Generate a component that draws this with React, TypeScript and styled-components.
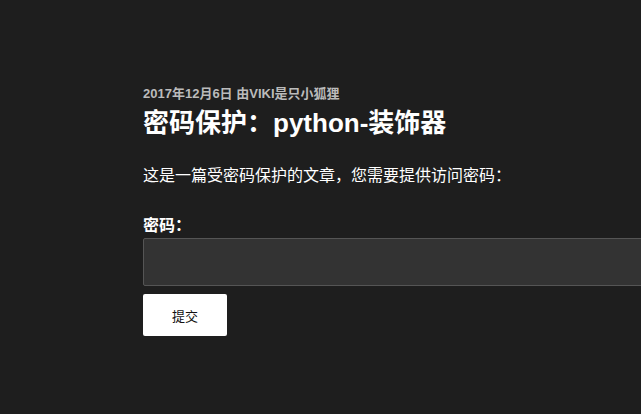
import React from "react";
import styled, { createGlobalStyle } from "styled-components";

const Global = createGlobalStyle`
  html, body { margin: 0; padding: 0; background: #1e1e1e; }
  body { font-family: "Liberation Sans", Arial, "Noto Sans CJK SC", sans-serif; color: #ffffff; }
`;

const Page = styled.main`
  padding: 86px 0 0 143px;
  overflow: hidden;
  height: 414px;
  box-sizing: border-box;
`;

const Meta = styled.div`
  font-size: 13px;
  font-weight: 700;
  color: #bbbbbb;
  line-height: 16px;
`;

const Title = styled.h1`
  font-size: 26px;
  font-weight: 700;
  color: #ffffff;
  margin: 5px 0 0;
  line-height: 32px;
`;

const Text = styled.p`
  font-size: 16px;
  margin: 26px 0 0;
  line-height: 22px;
`;

const Form = styled.form`
  margin-top: 27px;
  display: flex;
  flex-direction: column;
  align-items: flex-start;
`;

const Label = styled.label`
  font-size: 16px;
  font-weight: 700;
  line-height: 24px;
`;

const Input = styled.input`
  width: 520px;
  height: 48px;
  box-sizing: border-box;
  background: #333333;
  border: 1px solid #555555;
  border-radius: 2px;
`;

const Button = styled.button`
  margin-top: 8px;
  width: 84px;
  height: 42px;
  background: #ffffff;
  color: #111111;
  border: none;
  border-radius: 2px;
  font-family: inherit;
  font-size: 13px;
`;

export default function App() {
  return (
    <>
      <Global />
      <Page>
        <Meta>2017年12月6日 由VIKI是只小狐狸</Meta>
        <Title>密码保护：python-装饰器</Title>
        <Text>这是一篇受密码保护的文章，您需要提供访问密码：</Text>
        <Form onSubmit={(e) => e.preventDefault()}>
          <Label htmlFor="pw">密码：</Label>
          <Input id="pw" type="password" />
          <Button type="submit">提交</Button>
        </Form>
      </Page>
    </>
  );
}
